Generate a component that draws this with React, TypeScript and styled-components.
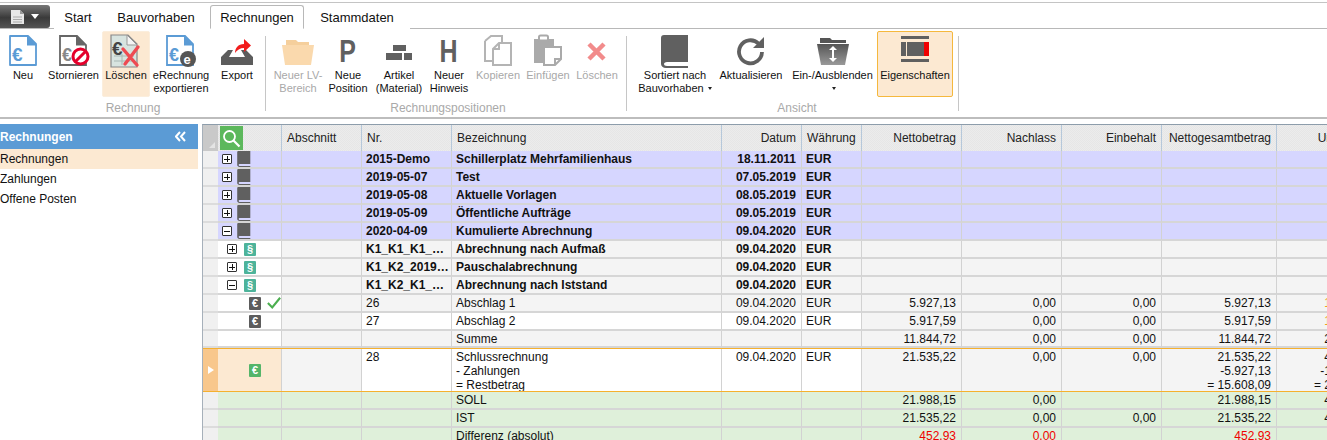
import React from 'react';
import styled, { createGlobalStyle } from 'styled-components';

const GlobalStyle = createGlobalStyle`
  html, body {
    margin: 0;
    height: 440px;
    overflow: hidden;
    background: #fff;
    font-family: "Liberation Sans", Arial, sans-serif;
    color: #111;
  }
  * { box-sizing: border-box; }
`;

const BLUE = '#5b9bd5';
const DARK = '#606060';
const OFF = '#b4b4b4';

function FileEuro() {
  return (
    <svg width="34" height="34" viewBox="0 0 34 34">
      <path d="M4 2h18l8 8v21H4z" fill="#fff" stroke={BLUE} strokeWidth="1.800" strokeLinejoin="round" />
      <path d="M21 1.500v10h10z" fill={BLUE} />
      <text x="6" y="27" fontSize="19" fontWeight="700" fill={BLUE} fontFamily="Liberation Sans">€</text>
    </svg>
  );
}

function StornoIcon() {
  return (
    <svg width="34" height="34" viewBox="0 0 34 34">
      <path d="M3 2h17l9 9v20H3z" fill="#fff" stroke="#666" strokeWidth="1.800" />
      <path d="M19 1.500v10h10z" fill="#666" />
      <text x="5" y="27" fontSize="18" fontWeight="700" fill="#888" fontFamily="Liberation Sans">€</text>
      <circle cx="23.500" cy="22.500" r="7.500" fill="#fff" stroke="#e4002b" strokeWidth="3" />
      <path d="M18.500 27.500l10-10" stroke="#e4002b" strokeWidth="3" />
    </svg>
  );
}

function DeleteIcon() {
  return (
    <svg width="36" height="34" viewBox="0 0 36 34">
      <path d="M3 1h17l9 9v23H3z" fill="#d8e4e0" stroke="#888" strokeWidth="1.200" />
      <path d="M19 1v10h10z" fill="#f4f4f4" stroke="#999" />
      <path d="M6 22h20M6 27h20M14 20v11" stroke="#a8b8b4" strokeWidth="1" />
      <text x="4" y="21" fontSize="19" fontWeight="700" fill="#444" fontFamily="Liberation Sans">€</text>
      <path d="M15 15l14 16M30 13L17 30" stroke="#ee4a52" strokeWidth="3.400" strokeLinecap="round" />
    </svg>
  );
}

function ERechnungIcon() {
  return (
    <svg width="34" height="34" viewBox="0 0 34 34">
      <path d="M3 2h18l8 8v21H3z" fill="#fff" stroke={BLUE} strokeWidth="1.800" />
      <path d="M20 1.500v10h10z" fill={BLUE} />
      <text x="5" y="27" fontSize="18" fontWeight="700" fill={BLUE} fontFamily="Liberation Sans">€</text>
      <circle cx="24" cy="25" r="8" fill="#555" />
      <text x="19.500" y="29.500" fontSize="13" fontWeight="700" fill="#fff" fontFamily="Liberation Sans">e</text>
    </svg>
  );
}

function ExportIcon() {
  return (
    <svg width="36" height="34" viewBox="0 0 36 34">
      <path d="M2 23l7-7h5l-4 7h16l-4-7h5l7 7v8H2z" fill="#5c5c5c" />
      <path d="M16 19c0-5 3-9 9-9V5l7 6.500-7 6.500v-4c-4 0-7 2-9 5z" fill="#f21c1c" />
    </svg>
  );
}

function FolderIcon() {
  return (
    <svg width="34" height="34" viewBox="0 0 34 34">
      <path d="M5 6h10l2 2h11v4H5z" fill="#f5cf9c" />
      <path d="M1 11h32l-3 20H4z" fill="#fad9ad" />
    </svg>
  );
}

function BricksIcon() {
  return (
    <svg width="28" height="34" viewBox="0 0 28 34">
      <path d="M8 11h13v6H8zM1 19h16v7H1zM19 19h8v7h-8z" fill={DARK} />
    </svg>
  );
}

function CopyIcon() {
  return (
    <svg width="30" height="34" viewBox="0 0 30 34">
      <path d="M2 7l6-5h11v6M2 7v20h7" fill="none" stroke={OFF} strokeWidth="2" />
      <path d="M16 9h12v22H10V15z" fill="#fff" stroke={OFF} strokeWidth="2" />
      <path d="M16 9v6h-6" fill="none" stroke={OFF} strokeWidth="2" />
    </svg>
  );
}

function PasteIcon() {
  return (
    <svg width="30" height="34" viewBox="0 0 30 34">
      <path d="M1 5h20v9H10v15H1z" fill="#aaa" />
      <rect x="6" y="1.500" width="9" height="5" rx="1.500" fill="#fff" stroke="#aaa" strokeWidth="2" />
      <path d="M11 13h17v12l-6 6H11z" fill="#fff" stroke="#aaa" strokeWidth="2" />
      <path d="M22 31v-6h6" fill="none" stroke="#aaa" strokeWidth="2" />
    </svg>
  );
}

function CrossIcon() {
  return (
    <svg width="22" height="34" viewBox="0 0 22 34">
      <path d="M3 10l15 15M18 10L3 25" stroke="#f28b8b" strokeWidth="4.500" />
    </svg>
  );
}

function BookIcon({ w = 28, h = 33 }: { w?: number; h?: number }) {
  return (
    <svg width={w} height={h} viewBox="0 0 28 33">
      <path d="M3 0h24v27H6c-2 0-3 1-3 2s1 2 3 2h21v2H5c-3 0-5-2-5-4V3c0-2 1-3 3-3z" fill={DARK} />
    </svg>
  );
}

function RefreshIcon() {
  return (
    <svg width="30" height="34" viewBox="0 0 30 34">
      <path d="M22.500 9.500A11.500 11.500 0 1 0 26 18" fill="none" stroke={DARK} strokeWidth="3.800" />
      <path d="M28 3v11H17z" fill={DARK} />
    </svg>
  );
}

function ToggleFolderIcon() {
  return (
    <svg width="34" height="34" viewBox="0 0 34 34">
      <defs>
        <linearGradient id="fold" x1="0" y1="0" x2="0" y2="1">
          <stop offset="0" stopColor="#555" />
          <stop offset="1" stopColor="#999" />
        </linearGradient>
      </defs>
      <path d="M4 4h10l2 2h14v3H4z" fill="#555" />
      <path d="M1 10h32l-4 21H5z" fill="url(#fold)" />
      <path d="M17 12l4 4h-3v8h3l-4 4-4-4h3v-8h-3z" fill="#fff" />
    </svg>
  );
}

function PropsIcon() {
  return (
    <svg width="30" height="34" viewBox="0 0 30 34">
      <path d="M1 2h28v3H1zM1 25h28v3H1z" fill={DARK} />
      <path d="M1 8h5v14H1zM7 8h17v14H7z" fill={DARK} />
      <path d="M24 8h5v14h-5z" fill="#f00000" />
    </svg>
  );
}

function AppDocIcon() {
  return (
    <svg width="14" height="16" viewBox="0 0 14 16">
      <path d="M0 1h9l4 4v10H0z" fill="#e8e8e8" />
      <path d="M9 1v4h4z" fill="#999" />
      <path d="M2 8h9M2 10.500h9M2 13h9" stroke="#aaa" />
    </svg>
  );
}

function SearchIcon() {
  return (
    <svg width="19" height="19" viewBox="0 0 19 19">
      <circle cx="7.500" cy="7.500" r="5.500" fill="none" stroke="#fff" strokeWidth="1.800" />
      <path d="M11.500 11.500l6 6" stroke="#fff" strokeWidth="2.200" />
    </svg>
  );
}

function CheckIcon() {
  return (
    <svg width="16" height="14" viewBox="0 0 16 14">
      <path d="M1 7l5 5L15 1" fill="none" stroke="#4caf50" strokeWidth="2.400" />
    </svg>
  );
}

function CollapseIcon() {
  return (
    <svg width="11" height="11" viewBox="0 0 11 11">
      <path d="M5 1L1 5.500 5 10M10 1L6 5.500 10 10" fill="none" stroke="#fff" strokeWidth="2" />
    </svg>
  );
}

const Page = styled.div`
  width: 1327px;
  height: 440px;
  overflow: hidden;
  border-top: 2px solid #fff;
  display: flex;
  flex-direction: column;
`;

const TabBar = styled.div`
  height: 27px;
  flex: none;
  display: flex;
  align-items: flex-end;
  border-top: 1px solid #c4c4c4;
  border-bottom: 1px solid #b8b8b8;
`;

const AppButton = styled.div`
  width: 50px;
  height: 23px;
  margin-right: 4px;
  border-radius: 0 3px 3px 0;
  background: linear-gradient(#777 0%, #3a3a3a 55%, #555 100%);
  display: flex;
  align-items: center;
  justify-content: center;
  gap: 6px;
`;

const Caret = styled.span`
  width: 0;
  height: 0;
  border-left: 4px solid transparent;
  border-right: 4px solid transparent;
  border-top: 5px solid #fff;
`;

const Tab = styled.div<{ $active?: boolean; $w: number }>`
  width: ${p => p.$w}px;
  height: 24px;
  margin-bottom: -1px;
  font-size: 13px;
  display: flex;
  align-items: center;
  justify-content: center;
  border: 1px solid ${p => (p.$active ? '#b8b8b8' : 'transparent')};
  border-bottom-color: ${p => (p.$active ? '#fff' : 'transparent')};
  border-radius: 3px 3px 0 0;
  background: #fff;
`;

const Ribbon = styled.div`
  height: 90px;
  flex: none;
  display: flex;
  border-bottom: 2px solid #bdbdbd;
  padding: 2px 0 0 1px;
`;

const Group = styled.div<{ $w: number; $pad?: number }>`
  width: ${p => p.$w}px;
  padding-left: ${p => p.$pad ?? 0}px;
  display: flex;
  flex-direction: column;
`;

const Separator = styled.div`
  width: 1px;
  height: 75px;
  margin-top: 5px;
  background: #c6c6c6;
`;

const GroupButtons = styled.div`
  display: flex;
  height: 66px;
`;

const GroupLabel = styled.div`
  text-align: center;
  font-size: 12px;
  color: #a9a9a9;
  line-height: 14px;
  margin-top: 4px;
`;

const RibbonButton = styled.div<{ $w: number; $state?: 'hover' | 'on'; $off?: boolean }>`
  width: ${p => p.$w}px;
  flex: none;
  display: flex;
  flex-direction: column;
  align-items: center;
  text-align: center;
  font-size: 11px;
  line-height: 13px;
  white-space: nowrap;
  padding-top: 2px;
  border-radius: 2px;
  color: ${p => (p.$off ? '#a8a8a8' : '#111')};
  border: 1px solid ${p => (p.$state === 'on' ? '#f5b83d' : p.$state === 'hover' ? '#fbeedd' : 'transparent')};
  background: ${p => (p.$state ? '#fce9d2' : 'transparent')};
`;

const IconSlot = styled.div`
  height: 34px;
  margin-bottom: 1px;
  display: flex;
  align-items: center;
  justify-content: center;
`;

const Letter = styled.span`
  font-size: 32px;
  font-weight: 700;
  line-height: 34px;
  color: ${DARK};
  display: inline-block;
  transform: scaleX(0.78);
`;

const SmallCaret = styled.span`
  display: inline-block;
  width: 0;
  height: 0;
  margin-left: 4px;
  vertical-align: 2px;
  border-left: 2.5px solid transparent;
  border-right: 2.5px solid transparent;
  border-top: 3px solid #222;
`;

const Body = styled.div`
  flex: 1;
  min-height: 0;
  display: flex;
  margin-top: 5px;
`;

const Sidebar = styled.div`
  width: 198px;
  flex: none;
  margin-right: 4px;
  font-size: 12px;
`;

const SidebarHead = styled.div`
  height: 25px;
  padding: 0 12px 0 0;
  background: ${BLUE};
  color: #fff;
  font-weight: 700;
  display: flex;
  align-items: center;
  justify-content: space-between;
`;

const SidebarItem = styled.div<{ $active?: boolean }>`
  height: 20px;
  line-height: 20px;
  background: ${p => (p.$active ? '#fce9d2' : '#fff')};
`;

const Grid = styled.div`
  flex: 1;
  min-width: 0;
  overflow: hidden;
  border-top: 1px solid #8d9dab;
  border-left: 1px solid #a6b0ba;
  font-size: 12px;
`;

const columns = '15px 64px 80px 90px 270px 80px 60px 100px 100px 100px 115px 100px';

const Row = styled.div<{ $h?: number; $selected?: boolean }>`
  display: grid;
  grid-template-columns: ${columns};
  width: 1174px;
  height: ${p => p.$h ?? 18}px;
  ${p => (p.$selected ? 'border-top: 1px solid #f5b02e; border-bottom: 1px solid #f5b02e;' : '')}
`;

const dots = `
  background-color: #ececec;
  background-image: conic-gradient(#e6e6e6 25%, transparent 0 50%, #e6e6e6 0 75%, transparent 0);
  background-size: 2px 2px;
`;

const HeadCell = styled.div<{ $right?: boolean }>`
  height: 26px;
  padding: 0 5px;
  line-height: 26px;
  text-align: ${p => (p.$right ? 'right' : 'left')};
  white-space: nowrap;
  ${dots}
  border-right: 1px solid #b6c8da;
  color: #222;
`;

const Corner = styled.div`
  height: 26px;
  background: #c9c9c9;
  position: relative;
  &::after {
    content: '';
    position: absolute;
    left: 6px;
    bottom: 3px;
    border-left: 6px solid transparent;
    border-bottom: 6px solid #e4e4e4;
  }
`;

const SearchCell = styled.div`
  ${dots}
  border-right: 1px solid #b6c8da;
  padding: 1px 0 0 2px;
`;

const SearchButton = styled.div`
  width: 23px;
  height: 24px;
  background: #5cb85c;
  display: flex;
  align-items: center;
  justify-content: center;
`;

const RowHead = styled.div<{ $selected?: boolean }>`
  background: ${p => (p.$selected ? '#f8c78c' : '#f0f0f0')};
  border-bottom: ${p => (p.$selected ? 'none' : '2px solid #dcdcdc')};
  display: flex;
  align-items: center;
  justify-content: center;
`;

const SelectedArrow = styled.span`
  border-top: 4px solid transparent;
  border-bottom: 4px solid transparent;
  border-left: 6px solid #fff;
`;

const Cell = styled.div<{ $bg: string; $right?: boolean; $bold?: boolean; $line?: boolean; $red?: boolean; $orange?: boolean; $flat?: boolean; $tight?: boolean }>`
  background: ${p => p.$bg};
  border-right: 1px solid #d2d2d2;
  border-bottom: ${p => (p.$flat ? 'none' : '2px solid #d6d6d6')};
  padding: ${p => (p.$line ? '1px' : '0')} ${p => (p.$tight ? 1 : 5)}px 0 4px;
  line-height: ${p => (p.$line ? '14px' : '16px')};
  text-align: ${p => (p.$right ? 'right' : 'left')};
  font-weight: ${p => (p.$bold ? 700 : 400)};
  color: ${p => (p.$red ? '#f00000' : p.$orange ? '#f0a020' : '#111')};
  white-space: ${p => (p.$line ? 'pre-line' : 'nowrap')};
  overflow: hidden;
  text-overflow: ellipsis;
`;

const TreeCell = styled.div<{ $bg: string; $indent: number; $flat?: boolean }>`
  background: ${p => p.$bg};
  border-right: 1px solid #d2d2d2;
  border-bottom: ${p => (p.$flat ? 'none' : '2px solid #d6d6d6')};
  padding-left: ${p => p.$indent}px;
  display: flex;
  align-items: center;
`;

const Toggle = styled.span<{ $open?: boolean; $gap: number }>`
  width: 10px;
  height: 10px;
  flex: none;
  margin-right: ${p => p.$gap}px;
  border: 1px solid #333;
  border-radius: 1px;
  background:
    linear-gradient(#111, #111) center / 6px 1px no-repeat,
    ${p => (p.$open ? '' : 'linear-gradient(#111, #111) center / 1px 6px no-repeat,')}
    #fff;
`;

const Badge = styled.span<{ $bg: string }>`
  width: 12px;
  height: 13px;
  flex: none;
  margin-right: 6px;
  border-radius: 1px;
  background: ${p => p.$bg};
  color: #fff;
  font-size: 11px;
  font-weight: 700;
  line-height: 13px;
  text-align: center;
`;

type Kind = 'year' | 'section' | 'item' | 'sum' | 'selected' | 'target';

interface Line {
  kind: Kind;
  open?: boolean;
  check?: boolean;
  white?: boolean;
  red?: boolean;
  orange?: boolean;
  values: string[];
}

const PURPLE = '#d6d6ff';
const GREY = '#f4f4f4';
const GREEN = '#dff0da';

const lines: Line[] = [
  { kind: 'year', values: ['2015-Demo', 'Schillerplatz Mehrfamilienhaus', '18.11.2011', 'EUR', '', '', '', '', ''] },
  { kind: 'year', values: ['2019-05-07', 'Test', '07.05.2019', 'EUR', '', '', '', '', ''] },
  { kind: 'year', values: ['2019-05-08', 'Aktuelle Vorlagen', '08.05.2019', 'EUR', '', '', '', '', ''] },
  { kind: 'year', values: ['2019-05-09', 'Öffentliche Aufträge', '09.05.2019', 'EUR', '', '', '', '', ''] },
  { kind: 'year', open: true, values: ['2020-04-09', 'Kumulierte Abrechnung', '09.04.2020', 'EUR', '', '', '', '', ''] },
  { kind: 'section', values: ['K1_K1_K1_2020', 'Abrechnung nach Aufmaß', '09.04.2020', 'EUR', '', '', '', '', ''] },
  { kind: 'section', values: ['K1_K2_2019_2020', 'Pauschalabrechnung', '09.04.2020', 'EUR', '', '', '', '', ''] },
  { kind: 'section', open: true, values: ['K1_K2_K1_2020', 'Abrechnung nach Iststand', '09.04.2020', 'EUR', '', '', '', '', ''] },
  { kind: 'item', check: true, orange: true, values: ['26', 'Abschlag 1', '09.04.2020', 'EUR', '5.927,13', '0,00', '0,00', '5.927,13', '1.126,15'] },
  { kind: 'item', white: true, orange: true, values: ['27', 'Abschlag 2', '09.04.2020', 'EUR', '5.917,59', '0,00', '0,00', '5.917,59', '1.124,34'] },
  { kind: 'sum', values: ['', 'Summe', '', '', '11.844,72', '0,00', '0,00', '11.844,72', '2.250,50'] },
  { kind: 'selected', white: true, values: ['28', 'Schlussrechnung\n- Zahlungen\n= Restbetrag', '09.04.2020', 'EUR', '21.535,22', '0,00', '0,00', '21.535,22\n-5.927,13\n= 15.608,09', '4.091,69\n-1.126,15\n= 2.965,54'] },
  { kind: 'target', values: ['', 'SOLL', '', '', '21.988,15', '0,00', '', '21.988,15', '4.177,75'] },
  { kind: 'target', values: ['', 'IST', '', '', '21.535,22', '0,00', '0,00', '21.535,22', '4.091,69'] },
  { kind: 'target', red: true, values: ['', 'Differenz (absolut)', '', '', '452,93', '0,00', '', '452,93', '86,06'] },
];

function background(line: Line, index: number) {
  if (line.kind === 'year') return PURPLE;
  if (line.kind === 'target') return GREEN;
  if (line.white && index >= 0 && index <= 3) return '#fff';
  return GREY;
}

function treeBackground(kind: Kind) {
  if (kind === 'year') return PURPLE;
  if (kind === 'selected') return '#fce9d2';
  if (kind === 'target') return GREEN;
  return '#fff';
}

function rowHeight(kind: Kind) {
  if (kind === 'selected') return 44;
  if (kind === 'sum') return 17;
  return 18;
}

const indents: Record<Kind, number> = { year: 4, section: 9, item: 31, sum: 31, selected: 31, target: 31 };

function TreeContent({ line }: { line: Line }) {
  if (line.kind === 'year') {
    return (
      <>
        <Toggle $open={line.open} $gap={5} />
        <BookIcon w={14} h={16} />
      </>
    );
  }
  if (line.kind === 'section') {
    return (
      <>
        <Toggle $open={line.open} $gap={7} />
        <Badge $bg="#4db39a">§</Badge>
      </>
    );
  }
  if (line.kind === 'item') {
    return (
      <>
        <Badge $bg="#5c5c5c">€</Badge>
        {line.check && <CheckIcon />}
      </>
    );
  }
  if (line.kind === 'selected') return <Badge $bg="#55b56a">€</Badge>;
  return null;
}

function GridRow({ line }: { line: Line }) {
  const selected = line.kind === 'selected';
  const bold = line.kind === 'year' || line.kind === 'section';
  const [nr, title, date, currency, ...money] = line.values;
  return (
    <Row $h={rowHeight(line.kind)} $selected={selected}>
      <RowHead $selected={selected}>{selected && <SelectedArrow />}</RowHead>
      <TreeCell $bg={treeBackground(line.kind)} $indent={indents[line.kind]} $flat={selected}>
        <TreeContent line={line} />
      </TreeCell>
      <Cell $bg={line.kind === 'year' ? PURPLE : line.kind === 'target' ? GREEN : GREY} $flat={selected} />
      <Cell $bg={background(line, 0)} $bold={bold} $line={selected} $flat={selected} $tight>{nr}</Cell>
      <Cell $bg={background(line, 1)} $bold={bold} $line={selected} $flat={selected}>{title}</Cell>
      <Cell $bg={background(line, 2)} $bold={bold} $right $line={selected} $flat={selected}>{date}</Cell>
      <Cell $bg={background(line, 3)} $bold={bold} $line={selected} $flat={selected}>{currency}</Cell>
      {money.map((value, i) => (
        <Cell key={i} $bg={background(line, 9)} $right $line={selected} $flat={selected} $red={line.red} $orange={line.orange && i === 4}>{value}</Cell>
      ))}
    </Row>
  );
}

const headers: Array<[string, boolean]> = [
  ['Abschnitt', false], ['Nr.', false], ['Bezeichnung', false], ['Datum', true], ['Währung', false],
  ['Nettobetrag', true], ['Nachlass', true], ['Einbehalt', true], ['Nettogesamtbetrag', true], ['Umsatzst.', true],
];

export default function App() {
  return (
    <Page>
      <GlobalStyle />
      <TabBar>
        <AppButton><AppDocIcon /><Caret /></AppButton>
        <Tab $w={48}>Start</Tab>
        <Tab $w={108}>Bauvorhaben</Tab>
        <Tab $w={94} $active>Rechnungen</Tab>
        <Tab $w={106}>Stammdaten</Tab>
      </TabBar>
      <Ribbon>
        <Group $w={264}>
          <GroupButtons>
            <RibbonButton $w={44}><IconSlot><FileEuro /></IconSlot><span>Neu</span></RibbonButton>
            <RibbonButton $w={57}><IconSlot><StornoIcon /></IconSlot><span>Stornieren</span></RibbonButton>
            <RibbonButton $w={48} $state="hover"><IconSlot><DeleteIcon /></IconSlot><span>Löschen</span></RibbonButton>
            <RibbonButton $w={62}><IconSlot><ERechnungIcon /></IconSlot><span>eRechnung<br />exportieren</span></RibbonButton>
            <RibbonButton $w={50}><IconSlot><ExportIcon /></IconSlot><span>Export</span></RibbonButton>
          </GroupButtons>
          <GroupLabel>Rechnung</GroupLabel>
        </Group>
        <Separator />
        <Group $w={360} $pad={4}>
          <GroupButtons>
            <RibbonButton $w={56} $off><IconSlot><FolderIcon /></IconSlot><span>Neuer LV-<br />Bereich</span></RibbonButton>
            <RibbonButton $w={44}><IconSlot><Letter>P</Letter></IconSlot><span>Neue<br />Position</span></RibbonButton>
            <RibbonButton $w={58}><IconSlot><BricksIcon /></IconSlot><span>Artikel<br />(Material)</span></RibbonButton>
            <RibbonButton $w={42}><IconSlot><Letter>H</Letter></IconSlot><span>Neuer<br />Hinweis</span></RibbonButton>
            <RibbonButton $w={56} $off><IconSlot><CopyIcon /></IconSlot><span>Kopieren</span></RibbonButton>
            <RibbonButton $w={44} $off><IconSlot><PasteIcon /></IconSlot><span>Einfügen</span></RibbonButton>
            <RibbonButton $w={54} $off><IconSlot><CrossIcon /></IconSlot><span>Löschen</span></RibbonButton>
          </GroupButtons>
          <GroupLabel>Rechnungspositionen</GroupLabel>
        </Group>
        <Separator />
        <Group $w={331} $pad={9}>
          <GroupButtons>
            <RibbonButton $w={78}><IconSlot><BookIcon /></IconSlot><span>Sortiert nach<br />Bauvorhaben<SmallCaret /></span></RibbonButton>
            <RibbonButton $w={74}><IconSlot><RefreshIcon /></IconSlot><span>Aktualisieren</span></RibbonButton>
            <RibbonButton $w={89}><IconSlot><ToggleFolderIcon /></IconSlot><span>Ein-/Ausblenden<br /><SmallCaret /></span></RibbonButton>
            <RibbonButton $w={76} $state="on"><IconSlot><PropsIcon /></IconSlot><span>Eigenschaften</span></RibbonButton>
          </GroupButtons>
          <GroupLabel>Ansicht</GroupLabel>
        </Group>
        <Separator />
      </Ribbon>
      <Body>
        <Sidebar>
          <SidebarHead>Rechnungen<CollapseIcon /></SidebarHead>
          <SidebarItem $active>Rechnungen</SidebarItem>
          <SidebarItem>Zahlungen</SidebarItem>
          <SidebarItem>Offene Posten</SidebarItem>
        </Sidebar>
        <Grid>
          <Row $h={26}>
            <Corner />
            <SearchCell><SearchButton><SearchIcon /></SearchButton></SearchCell>
            {headers.map(([label, right]) => (
              <HeadCell key={label} $right={right}>{label}</HeadCell>
            ))}
          </Row>
          {lines.map((line, i) => (
            <GridRow key={i} line={line} />
          ))}
        </Grid>
      </Body>
    </Page>
  );
}
